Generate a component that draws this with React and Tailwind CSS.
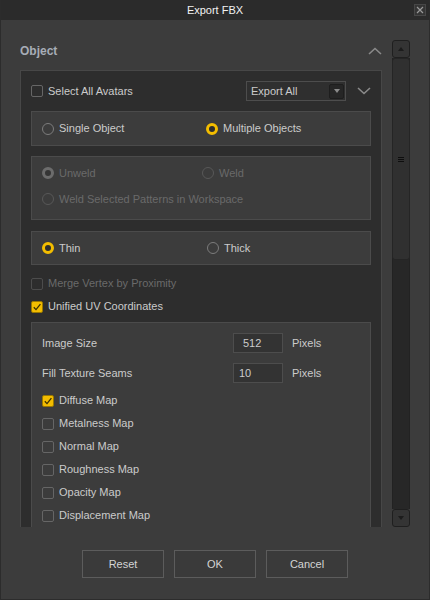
import React from "react";

const font = { fontFamily: '"Liberation Sans", Arial, sans-serif' };

function Check({ checked = false, disabled = false }) {
  if (checked) {
    return (
      <span className="w-[12px] h-[12px] shrink-0 rounded-[2px] border border-[#9a7800] bg-[#f3bd00] flex items-center justify-center">
        <svg width="10" height="10" viewBox="0 0 10 10">
          <path d="M1.8 5.2 L4 7.6 L8.4 2.2" fill="none" stroke="#3a3000" strokeWidth="1.3" />
        </svg>
      </span>
    );
  }
  return (
    <span
      className={
        "w-[12px] h-[12px] shrink-0 rounded-[2px] border " +
        (disabled ? "border-[#4c4c4c]" : "border-[#666666]")
      }
    />
  );
}

function Radio({ selected = false, disabled = false }) {
  if (selected) {
    return (
      <span
        className={
          "w-[12px] h-[12px] shrink-0 rounded-full border-[3px] flex items-center justify-center " +
          (disabled ? "border-[#6c6c6c] bg-[#353535]" : "border-[#f3bd00] bg-[#2d2d2d]")
        }
      />
    );
  }
  return (
    <span
      className={
        "w-[12px] h-[12px] shrink-0 rounded-full border " +
        (disabled ? "border-[#585858]" : "border-[#7c7c7c]")
      }
    />
  );
}

function Opt({ kind, on, disabled, label }) {
  return (
    <div className="flex items-center h-[20px]">
      {kind === "radio" ? <Radio selected={on} disabled={disabled} /> : <Check checked={on} disabled={disabled} />}
      <span className={"ml-[5px] text-[11px] " + (disabled ? "text-[#6a6a6a]" : "text-[#cbcbcb]")}>{label}</span>
    </div>
  );
}

function Group({ className = "", children }) {
  return <div className={"border border-[#4b4b4b] bg-[#3c3c3c] " + className}>{children}</div>;
}

function Btn({ children }) {
  return (
    <button className="w-[82px] h-[28px] border border-[#5c5c5c] bg-[#3a3a3a] text-[11px] text-[#d4d4d4]">
      {children}
    </button>
  );
}

export default function App() {
  const maps = ["Metalness Map", "Normal Map", "Roughness Map", "Opacity Map", "Displacement Map"];
  return (
    <div style={font} className="w-[430px] h-[600px] bg-[#3c3c3c] flex flex-col border-x border-b border-[#2c2c2c] overflow-hidden">
      {/* title bar */}
      <div className="h-[20px] shrink-0 bg-[#2b2b2b] relative flex items-center justify-center -mx-px">
        <span className="text-[11px] text-[#f2f2f2]">Export FBX</span>
        <span className="absolute right-[4px] top-[4px] w-[12px] h-[12px] border border-[#474747] bg-[#353535] flex items-center justify-center">
          <svg width="8" height="8" viewBox="0 0 8 8">
            <path d="M1 1 L7 7 M7 1 L1 7" stroke="#9a9a9a" strokeWidth="1.2" />
          </svg>
        </span>
      </div>

      {/* body */}
      <div className="flex pt-[20px] pl-[19px]">
        {/* scroll viewport */}
        <div className="w-[362px] h-[487px] overflow-hidden flex flex-col">
          <div className="h-[22px] shrink-0 flex items-center justify-between">
            <span className="text-[12px] font-bold text-[#a7adb7]">Object</span>
            <svg width="14" height="8" viewBox="0 0 14 8">
              <path d="M1 7 L7 1.5 L13 7" fill="none" stroke="#8a8a8a" strokeWidth="1.6" />
            </svg>
          </div>
          <div className="mt-[8px] flex-1 border border-[#474747] bg-[#2d2d2d] px-[10px] pt-[10px]">
            {/* select all row */}
            <div className="flex items-center h-[20px]">
              <Check />
              <span className="ml-[5px] text-[11px] text-[#cbcbcb]">Select All Avatars</span>
              <div className="ml-auto w-[100px] h-[20px] border border-[#4d4d4d] bg-[#2f2f2f] flex items-center pl-[4px] pr-[1px]">
                <span className="text-[11px] text-[#cbcbcb]">Export All</span>
                <span className="ml-auto w-[15px] h-[15px] rounded-[2px] border border-[#1e1e1e] bg-[#262626] flex items-center justify-center">
                  <svg width="6" height="4" viewBox="0 0 6 4">
                    <path d="M0 0 L6 0 L3 4 Z" fill="#8a8a8a" />
                  </svg>
                </span>
              </div>
              <svg className="ml-[11px]" width="14" height="8" viewBox="0 0 14 8">
                <path d="M1 1 L7 6.5 L13 1" fill="none" stroke="#8a8a8a" strokeWidth="1.6" />
              </svg>
            </div>

            <Group className="mt-[10px] h-[35px] flex items-center pl-[10px]">
              <div className="w-[164px]">
                <Opt kind="radio" label="Single Object" />
              </div>
              <Opt kind="radio" on label="Multiple Objects" />
            </Group>

            <Group className="mt-[10px] h-[64px] pl-[10px] pt-[6px]">
              <div className="flex">
                <div className="w-[160px]">
                  <Opt kind="radio" on disabled label="Unweld" />
                </div>
                <Opt kind="radio" disabled label="Weld" />
              </div>
              <div className="mt-[6px]">
                <Opt kind="radio" disabled label="Weld Selected Patterns in Workspace" />
              </div>
            </Group>

            <Group className="mt-[11px] h-[34px] flex items-center pl-[10px]">
              <div className="w-[165px]">
                <Opt kind="radio" on label="Thin" />
              </div>
              <Opt kind="radio" label="Thick" />
            </Group>

            <div className="mt-[7px] h-[23px] flex items-center">
              <Opt kind="check" disabled label="Merge Vertex by Proximity" />
            </div>
            <div className="h-[23px] flex items-center">
              <Opt kind="check" on label="Unified UV Coordinates" />
            </div>

            <Group className="mt-[4px] pl-[10px] pt-[10px] pb-[40px]">
              <div className="flex items-center h-[20px]">
                <span className="w-[191px] text-[11px] text-[#cbcbcb]">Image Size</span>
                <div className="w-[50px] h-[20px] border border-[#4d4d4d] bg-[#333333] flex items-center pl-[9px]">
                  <span className="text-[11px] text-[#cbcbcb]">512</span>
                </div>
                <span className="ml-[9px] text-[11px] text-[#cbcbcb]">Pixels</span>
              </div>
              <div className="mt-[10px] flex items-center h-[20px]">
                <span className="w-[191px] text-[11px] text-[#cbcbcb]">Fill Texture Seams</span>
                <div className="w-[50px] h-[20px] border border-[#4d4d4d] bg-[#333333] flex items-center pl-[5px]">
                  <span className="text-[11px] text-[#cbcbcb]">10</span>
                </div>
                <span className="ml-[9px] text-[11px] text-[#cbcbcb]">Pixels</span>
              </div>
              <div className="mt-[6px] h-[23px] flex items-center">
                <Opt kind="check" on label="Diffuse Map" />
              </div>
              {maps.map((m) => (
                <div key={m} className="h-[23px] flex items-center">
                  <Opt kind="check" label={m} />
                </div>
              ))}
            </Group>
          </div>
        </div>

        {/* scrollbar */}
        <div className="ml-[10px] w-[18px] h-[487px] flex flex-col">
          <div className="h-[18px] shrink-0 rounded-[3px] border border-[#1f1f1f] bg-[#343434] flex items-center justify-center">
            <svg width="6" height="4" viewBox="0 0 6 4">
              <path d="M0 4 L6 4 L3 0 Z" fill="#1c1c1c" />
            </svg>
          </div>
          <div className="flex-1 flex flex-col bg-[#272727] border-x border-[#222222]">
            <div className="h-[202px] rounded-[3px] bg-[#303030] border border-[#252525] flex items-center justify-center -mx-px">
              <div className="flex flex-col gap-[1px]">
                <span className="w-[6px] h-[1px] bg-[#0e0e0e]" />
                <span className="w-[6px] h-[1px] bg-[#0e0e0e]" />
                <span className="w-[6px] h-[1px] bg-[#0e0e0e]" />
              </div>
            </div>
          </div>
          <div className="h-[18px] shrink-0 rounded-[3px] border border-[#1f1f1f] bg-[#343434] flex items-center justify-center">
            <svg width="6" height="4" viewBox="0 0 6 4">
              <path d="M0 0 L6 0 L3 4 Z" fill="#1c1c1c" />
            </svg>
          </div>
        </div>
      </div>

      {/* buttons */}
      <div className="mt-[23px] flex justify-center gap-[10px]">
        <Btn>Reset</Btn>
        <Btn>OK</Btn>
        <Btn>Cancel</Btn>
      </div>
    </div>
  );
}
